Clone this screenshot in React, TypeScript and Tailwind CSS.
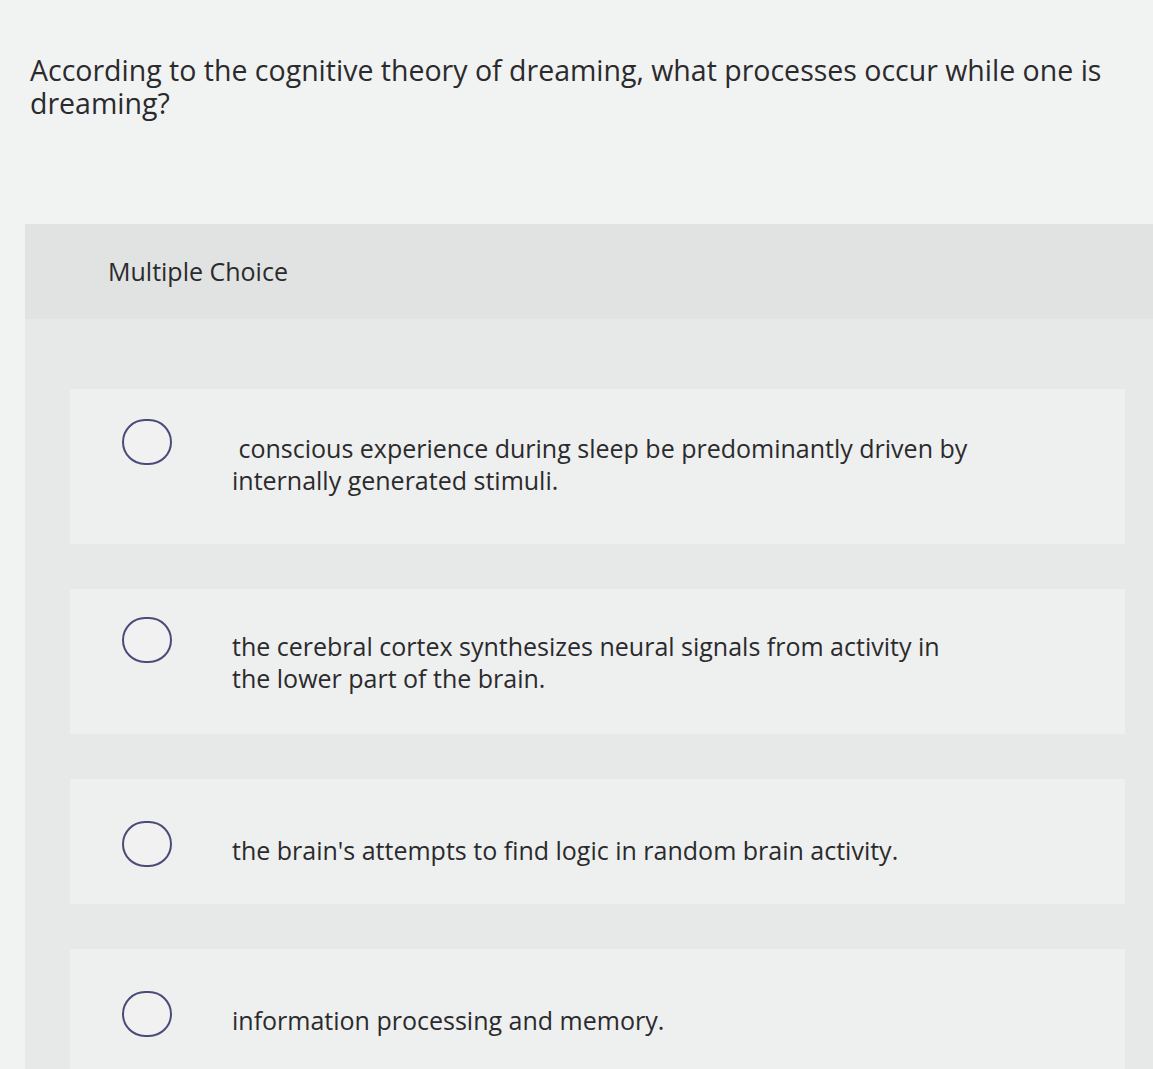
const options = [
  {
    text: " conscious experience during sleep be predominantly driven by internally generated stimuli.",
    box: "h-[155px] pt-[30px]",
  },
  {
    text: "the cerebral cortex synthesizes neural signals from activity in the lower part of the brain.",
    box: "h-[145px] pt-[28px]",
  },
  {
    text: "the brain's attempts to find logic in random brain activity.",
    box: "h-[125px] pt-[42px]",
  },
  {
    text: "information processing and memory.",
    box: "h-[130px] pt-[42px]",
  },
];

export default function App() {
  return (
    <div
      className="h-[1069px] w-[1153px] overflow-hidden bg-[#f1f2f2] text-[#2b2a2c]"
      style={{ fontFamily: '"Open Sans", "Liberation Sans", sans-serif' }}
    >
      <div className="px-[30px] pt-[54px]">
        <p className="w-[1110px] text-[28.5px] leading-[33px]">
          According to the cognitive theory of dreaming, what processes occur while one is dreaming?
        </p>
      </div>

      <div className="ml-[25px] mt-[104px] bg-[#e7e8e8]">
        <div className="flex h-[95px] items-center bg-[#e1e2e2] pl-[83px] text-[25px]">
          Multiple Choice
        </div>

        <div className="flex flex-col gap-[45px] pt-[70px] pl-[45px] pr-[28px]">
          {options.map((o, i) => (
            <label key={i} className={`flex ${o.box} items-start bg-[#eeefef] pl-[52px]`}>
              <span className="h-[46px] w-[50px] shrink-0 rounded-full border-2 border-[#4b4a78] bg-[#f1f1f1]" />
              <span className="ml-[60px] mt-[13px] w-[745px] whitespace-pre-wrap text-[25px] leading-[32px]">
                {o.text}
              </span>
            </label>
          ))}
        </div>
      </div>
    </div>
  );
}
